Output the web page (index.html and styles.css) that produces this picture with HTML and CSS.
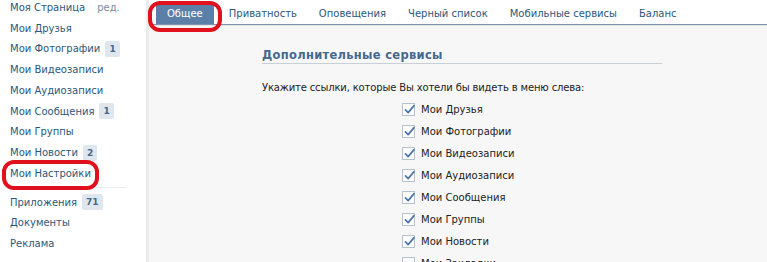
FILE: index.html
```html
<!DOCTYPE html>
<html lang="ru">
<head>
<meta charset="utf-8">
<link rel="stylesheet" href="styles.css">
</head>
<body>
<div class="page">
  <aside class="sidebar">
    <ul class="menu">
      <li class="item"><a>Моя Страница</a><span class="edit">ред.</span></li>
      <li class="item"><a>Мои Друзья</a></li>
      <li class="item"><a>Мои Фотографии</a><span class="badge">1</span></li>
      <li class="item"><a>Мои Видеозаписи</a></li>
      <li class="item"><a>Мои Аудиозаписи</a></li>
      <li class="item"><a>Мои Сообщения</a><span class="badge">1</span></li>
      <li class="item"><a>Мои Группы</a></li>
      <li class="item"><a>Мои Новости</a><span class="badge">2</span></li>
      <li class="item marked"><a>Мои Настройки</a><span class="oval oval-side"></span></li>
      <li class="sep"></li>
      <li class="item"><a>Приложения</a><span class="badge">71</span></li>
      <li class="item"><a>Документы</a></li>
      <li class="item"><a>Реклама</a></li>
    </ul>
  </aside>
  <main class="main">
    <nav class="tabs">
      <span class="tab active">Общее<span class="oval oval-tab"></span></span>
      <span class="tab">Приватность</span>
      <span class="tab">Оповещения</span>
      <span class="tab">Черный список</span>
      <span class="tab">Мобильные сервисы</span>
      <span class="tab">Баланс</span>
    </nav>
    <section class="panel">
      <h2 class="panel-title">Дополнительные сервисы</h2>
      <p class="hint">Укажите ссылки, которые Вы хотели бы видеть в меню слева:</p>
      <ul class="checks">
        <li class="check on"><span class="box"><svg viewBox="0 0 13 13" width="13" height="13"><path d="M2.5 6.8 L5.2 9.6 L11 2.6" fill="none" stroke="#4f77a6" stroke-width="1.7" stroke-linecap="round" stroke-linejoin="round"/></svg></span>Мои Друзья</li>
        <li class="check on"><span class="box"><svg viewBox="0 0 13 13" width="13" height="13"><path d="M2.5 6.8 L5.2 9.6 L11 2.6" fill="none" stroke="#4f77a6" stroke-width="1.7" stroke-linecap="round" stroke-linejoin="round"/></svg></span>Мои Фотографии</li>
        <li class="check on"><span class="box"><svg viewBox="0 0 13 13" width="13" height="13"><path d="M2.5 6.8 L5.2 9.6 L11 2.6" fill="none" stroke="#4f77a6" stroke-width="1.7" stroke-linecap="round" stroke-linejoin="round"/></svg></span>Мои Видеозаписи</li>
        <li class="check on"><span class="box"><svg viewBox="0 0 13 13" width="13" height="13"><path d="M2.5 6.8 L5.2 9.6 L11 2.6" fill="none" stroke="#4f77a6" stroke-width="1.7" stroke-linecap="round" stroke-linejoin="round"/></svg></span>Мои Аудиозаписи</li>
        <li class="check on"><span class="box"><svg viewBox="0 0 13 13" width="13" height="13"><path d="M2.5 6.8 L5.2 9.6 L11 2.6" fill="none" stroke="#4f77a6" stroke-width="1.7" stroke-linecap="round" stroke-linejoin="round"/></svg></span>Мои Сообщения</li>
        <li class="check on"><span class="box"><svg viewBox="0 0 13 13" width="13" height="13"><path d="M2.5 6.8 L5.2 9.6 L11 2.6" fill="none" stroke="#4f77a6" stroke-width="1.7" stroke-linecap="round" stroke-linejoin="round"/></svg></span>Мои Группы</li>
        <li class="check on"><span class="box"><svg viewBox="0 0 13 13" width="13" height="13"><path d="M2.5 6.8 L5.2 9.6 L11 2.6" fill="none" stroke="#4f77a6" stroke-width="1.7" stroke-linecap="round" stroke-linejoin="round"/></svg></span>Мои Новости</li>
        <li class="check"><span class="box"></span>Мои Закладки</li>
      </ul>
    </section>
  </main>
</div>
</body>
</html>
```

FILE: styles.css
```css
* { box-sizing: border-box; }
html, body { margin: 0; padding: 0; }
body {
  font-family: "DejaVu Sans", Verdana, sans-serif;
  font-size: 10px;
  color: #222;
  background: #f7f7f7;
  overflow: hidden;
}
.page {
  display: flex;
  height: 262px;
  overflow: hidden;
}
.sidebar {
  width: 149px;
  flex: none;
  background: #fff;
  border-right: 3px solid #ececec;
}
.menu {
  list-style: none;
  margin: -3px 0 0 0;
  padding: 0 0 0 10px;
}
.item {
  position: relative;
  display: flex;
  align-items: center;
  height: 20.75px;
  color: #2b587a;
}
.item a { color: #2b587a; }
.edit {
  margin-left: 12px;
  color: #7a8a99;
}
.badge {
  margin-left: 5px;
  padding: 0 4px;
  height: 16px;
  line-height: 16px;
  border-radius: 2px;
  background: #dfe6ed;
  color: #45688e;
  font-weight: bold;
  font-size: 9px;
}
.sep {
  height: 0;
  margin: 3px 20px 4px 0;
  border-top: 1px solid #e6ebf0;
}
.oval {
  position: absolute;
  border: 4px solid #e0101c;
  border-radius: 12px;
  pointer-events: none;
}
.oval-side {
  left: -8px;
  top: -3px;
  width: 97px;
  height: 30px;
}
.main {
  flex: 1;
  min-width: 0;
  background: #f7f7f7;
}
.tabs {
  display: flex;
  align-items: flex-end;
  height: 25px;
  padding-left: 7px;
  background: #fff;
  border-bottom: 1px solid #7d93ad;
  box-shadow: 0 1px 0 #e6e6e6;
}
.tab {
  position: relative;
  height: 19px;
  line-height: 18px;
  padding: 0 11px;
  color: #2b587a;
  white-space: nowrap;
}
.tab.active {
  background: #5b7fa6;
  color: #fff;
  padding: 0 11px;
  margin-right: 4px;
}
.oval-tab {
  left: -8px;
  top: -4px;
  width: 74px;
  height: 31px;
}
.panel {
  width: 400px;
  margin-left: 113px;
  padding-top: 23px;
}
.panel-title {
  margin: 0;
  padding-bottom: 1px;
  font-size: 11.5px;
  letter-spacing: 0.3px;
  font-weight: bold;
  color: #45688e;
  border-bottom: 1px solid #c9cfd6;
}
.hint {
  margin: 18px 0 5px 0;
  color: #222;
  letter-spacing: -0.15px;
}
.checks {
  list-style: none;
  margin: 0;
  padding: 0 0 0 140px;
}
.check {
  display: flex;
  align-items: center;
  height: 22px;
  color: #222;
}
.box {
  width: 13px;
  height: 13px;
  margin-right: 6px;
  border: 1px solid #b4c1ce;
  background: #fdfdfd;
  position: relative;
  flex: none;
}
.box svg {
  position: absolute;
  left: 0;
  top: -1px;
}
```
